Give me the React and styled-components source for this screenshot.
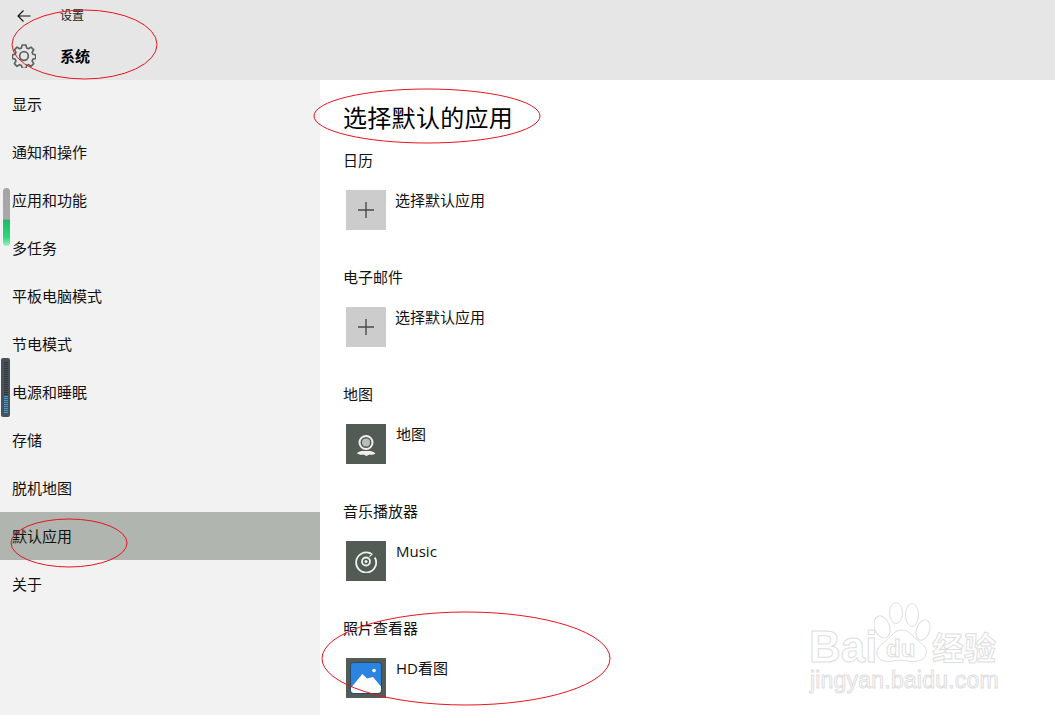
import React from 'react';
import styled, { createGlobalStyle } from 'styled-components';

const GlobalStyle = createGlobalStyle`
  html, body {
    margin: 0;
    padding: 0;
    background: #fff;
  }
  body {
    font-family: "Noto Sans CJK SC", "Liberation Sans", sans-serif;
    color: #111;
  }
`;

const Page = styled.div`
  position: relative;
  width: 1055px;
  height: 715px;
  overflow: hidden;
`;

const Header = styled.header`
  display: grid;
  grid-template-columns: 60px 1fr;
  grid-template-rows: 32px 48px;
  align-items: center;
  height: 80px;
  background: #e6e6e6;
`;

const BackSlot = styled.div`
  display: flex;
  align-items: center;
  padding-left: 16px;
  color: #111;
`;

const GearSlot = styled.div`
  display: flex;
  align-items: center;
  padding-left: 12px;
  color: #5c635d;
`;

const Crumb = styled.span`
  margin-top: -2px;
  font-size: 12px;
  line-height: 16px;
  color: #222;
`;

const SectionName = styled.span`
  font-size: 15px;
  line-height: 20px;
  font-weight: 700;
  color: #000;
`;

const Body = styled.div`
  display: flex;
  height: 635px;
`;

const Sidebar = styled.nav`
  position: relative;
  flex: 0 0 320px;
  background: #f2f2f2;
`;

const NavItem = styled.div`
  display: flex;
  align-items: center;
  height: 48px;
  padding: 0 0 2px 12px;
  box-sizing: border-box;
  font-size: 15px;
  color: #111;
  background: ${(p) => (p.$active ? '#b0b5b0' : 'transparent')};
`;

const ScrollThumb = styled.div`
  position: absolute;
  left: 3px;
  top: 108px;
  width: 7px;
  height: 58px;
  border-radius: 4px;
  background: linear-gradient(#a4a4a4 0, #a9a9a9 54%, #1fb866 55%, #2fd878 85%, #9cf0bc 100%);
`;

const Meter = styled.div`
  position: absolute;
  left: 1px;
  top: 278px;
  display: flex;
  flex-direction: column;
  justify-content: flex-end;
  gap: 1px;
  width: 9px;
  height: 59px;
  padding: 3px 2px 4px 3px;
  box-sizing: border-box;
  border-radius: 2px;
  background: #4a5158;
`;

const MeterTick = styled.i`
  display: block;
  flex: 0 0 1px;
  width: 4px;
  background: ${(p) => (p.$lit ? '#2aa6e8' : '#30353a')};
`;

const Main = styled.main`
  flex: 1;
  padding: 20px 0 0 23px;
`;

const Title = styled.h1`
  margin: 0 0 16px;
  font-size: 24px;
  line-height: 34px;
  font-weight: 400;
  letter-spacing: 0.3px;
  color: #000;
`;

const Group = styled.section`
  display: flex;
  flex-direction: column;
  gap: 20px;
  height: 97px;
  margin-bottom: 20px;
`;

const Label = styled.div`
  font-size: 15px;
  line-height: 20px;
  color: #111;
`;

const Row = styled.div`
  display: flex;
  align-items: flex-start;
  gap: ${(p) => (p.$plus ? '9px' : '10px')};
  margin-left: 3px;
`;

const Tile = styled.div`
  display: flex;
  align-items: center;
  justify-content: center;
  width: 40px;
  height: 40px;
  background: ${(p) => (p.$plus ? '#cccccc' : '#535c54')};
  color: ${(p) => (p.$plus ? '#4a4a4a' : '#f0f0f0')};
`;

const AppName = styled.span`
  font-family: "Open Sans", "Noto Sans CJK SC", sans-serif;
  font-size: 15px;
  line-height: 20px;
  color: #111;
`;

const Ring = styled.svg`
  position: absolute;
  left: ${(p) => p.$x}px;
  top: ${(p) => p.$y}px;
  overflow: visible;
  pointer-events: none;
`;

const Watermark = styled.div`
  position: absolute;
  left: 808px;
  top: 600px;
  width: 192px;
  height: 96px;
  color: #fff;
  -webkit-text-stroke: 1px #dedede;
`;

const MarkTop = styled.div`
  position: absolute;
  top: 22px;
  left: 1px;
  font-family: "Liberation Sans", sans-serif;
  font-size: 44px;
  line-height: 50px;
  font-weight: 700;
`;

const MarkCn = styled.span`
  position: absolute;
  top: 24px;
  left: 124px;
  font-size: 32px;
  line-height: 44px;
  font-weight: 700;
  white-space: nowrap;
`;

const MarkUrl = styled.div`
  position: absolute;
  left: 2px;
  top: 65px;
  font-family: "Liberation Sans", sans-serif;
  font-size: 23px;
  line-height: 30px;
  letter-spacing: 0.2px;
  white-space: nowrap;
`;

const Paw = styled.svg`
  position: absolute;
  left: 66px;
  top: 2px;
`;

const PawText = styled.span`
  position: absolute;
  left: 78px;
  top: 36px;
  font-family: "Liberation Sans", sans-serif;
  font-size: 24px;
  line-height: 26px;
  font-weight: 700;
`;

const navItems = ['显示', '通知和操作', '应用和功能', '多任务', '平板电脑模式', '节电模式', '电源和睡眠', '存储', '脱机地图', '默认应用', '关于'];

const BackArrow = () => (
  <svg width="16" height="16" viewBox="0 0 16 16" fill="none" stroke="currentColor" strokeWidth="1.1">
    <path d="M2 8h12.5M7.5 2.5 2 8l5.5 5.5" />
  </svg>
);

const Gear = () => (
  <svg width="24" height="24" viewBox="0 0 24 24" fill="none" stroke="currentColor" strokeWidth="1.7" strokeLinejoin="round">
    <path d="M10 1h4l.6 3 2 .9 2.600-1.700 2.800 2.800-1.700 2.600.9 2 2.800.6v3.800l-2.800.6-.9 2 1.700 2.600-2.800 2.800-2.600-1.700-2 .9-.6 2.800h-4l-.6-2.800-2-.9-2.600 1.700-2.800-2.800 1.700-2.600-.9-2-2.800-.6v-3.800l2.800-.6.9-2-1.700-2.600 2.800-2.800 2.600 1.700 2-.9z" transform="translate(.4 0) scale(.97)" />
    <circle cx="12" cy="12" r="4.300" />
  </svg>
);

const Plus = () => (
  <svg width="16" height="16" viewBox="0 0 16 16" stroke="currentColor" strokeWidth="1.4">
    <path d="M0 8h16M8 0v16" />
  </svg>
);

const MapIcon = () => (
  <svg width="28" height="28" viewBox="0 0 28 28" fill="none" stroke="currentColor">
    <circle cx="14" cy="12.500" r="6.500" strokeWidth="2" />
    <circle cx="14" cy="12.500" r="4" fill="#b9bdb9" stroke="none" />
    <path d="M4.500 23.500c2-2 5-2.500 6.500-2.500h6c1.500 0 4.500.5 6.500 2.500-2 1.500-4 1.500-6 1l-3 1.500-3-1.500c-2 .5-4 .5-6-1z" fill="currentColor" stroke="none" />
  </svg>
);

const MusicIcon = () => (
  <svg width="24" height="24" viewBox="0 0 24 24" fill="none" stroke="currentColor">
    <path d="M16.500 4.500A10 10 0 1 0 20.800 8.500" strokeWidth="1.800" />
    <path d="M15 3.200 18 5.200l-2.500 2.500" strokeWidth="1.200" />
    <circle cx="12" cy="12.500" r="4" strokeWidth="1.800" />
    <circle cx="12" cy="12.500" r="1.500" fill="currentColor" stroke="none" />
  </svg>
);

const PhotoIcon = () => (
  <svg width="32" height="32" viewBox="0 0 32 32">
    <rect x=".5" y=".5" width="31" height="31" rx="3" fill="#2b85e0" stroke="#27496b" strokeWidth="1" />
    <circle cx="24" cy="8.600" r="1.800" fill="#fff" />
    <path d="M1 25.800 12.400 12l4.600 4.500 6-1.500 8 9.400V28a3 3 0 0 1-3 3H4a3 3 0 0 1-3-3z" fill="#fff" />
  </svg>
);

const groups = [
  { label: '日历', name: '选择默认应用', plus: true, icon: <Plus /> },
  { label: '电子邮件', name: '选择默认应用', plus: true, icon: <Plus /> },
  { label: '地图', name: '地图', icon: <MapIcon /> },
  { label: '音乐播放器', name: 'Music', icon: <MusicIcon /> },
  { label: '照片查看器', name: 'HD看图', icon: <PhotoIcon /> },
];

const rings = [
  { x: 12, y: 9.500, rx: 72.500, ry: 34.500 },
  { x: 313.500, y: 88.500, rx: 113, ry: 27 },
  { x: 10.500, y: 518.500, rx: 58, ry: 24 },
  { x: 321.500, y: 611.500, rx: 144, ry: 46.500 },
];

const App = () => {
  return (
    <Page>
      <GlobalStyle />
      <Header>
        <BackSlot><BackArrow /></BackSlot>
        <Crumb>设置</Crumb>
        <GearSlot><Gear /></GearSlot>
        <SectionName>系统</SectionName>
      </Header>
      <Body>
        <Sidebar>
          {navItems.map((item) => (
            <NavItem key={item} $active={item === '默认应用'}>{item}</NavItem>
          ))}
          <ScrollThumb />
          <Meter>
            {Array.from({ length: 26 }).map((_, i) => (
              <MeterTick key={i} $lit={i > 16} />
            ))}
          </Meter>
        </Sidebar>
        <Main>
          <Title>选择默认的应用</Title>
          {groups.map((g) => (
            <Group key={g.label}>
              <Label>{g.label}</Label>
              <Row $plus={g.plus}>
                <Tile $plus={g.plus}>{g.icon}</Tile>
                <AppName>{g.name}</AppName>
              </Row>
            </Group>
          ))}
        </Main>
      </Body>
      <Watermark>
        <MarkTop>Bai</MarkTop>
        <Paw width="58" height="62" viewBox="0 0 58 62" fill="#fff" stroke="#dedede" strokeWidth="1">
          <ellipse cx="8" cy="25" rx="7.500" ry="11.500" transform="rotate(-20 8 25)" />
          <ellipse cx="22" cy="11" rx="6.500" ry="10.500" />
          <ellipse cx="38" cy="13" rx="6.500" ry="11.500" />
          <ellipse cx="49" cy="28" rx="6.500" ry="10.500" transform="rotate(20 49 28)" />
          <path d="M28 28c7 0 9 5 14 9 6 5 12 8 10 15-2 8-12 8-18 7-6-1-10-1-16 0-7 1-15 0-15-8 0-6 5-9 10-13 5-4 7-10 15-10z" />
        </Paw>
        <PawText>du</PawText>
        <MarkCn>经验</MarkCn>
        <MarkUrl>jingyan.baidu.com</MarkUrl>
      </Watermark>
      {rings.map((r) => (
        <Ring key={r.x} $x={r.x} $y={r.y} width={r.rx * 2} height={r.ry * 2}>
          <ellipse cx={r.rx} cy={r.ry} rx={r.rx} ry={r.ry} fill="none" stroke="#e8141e" strokeWidth="1" />
        </Ring>
      ))}
    </Page>
  );
};

export default App;
